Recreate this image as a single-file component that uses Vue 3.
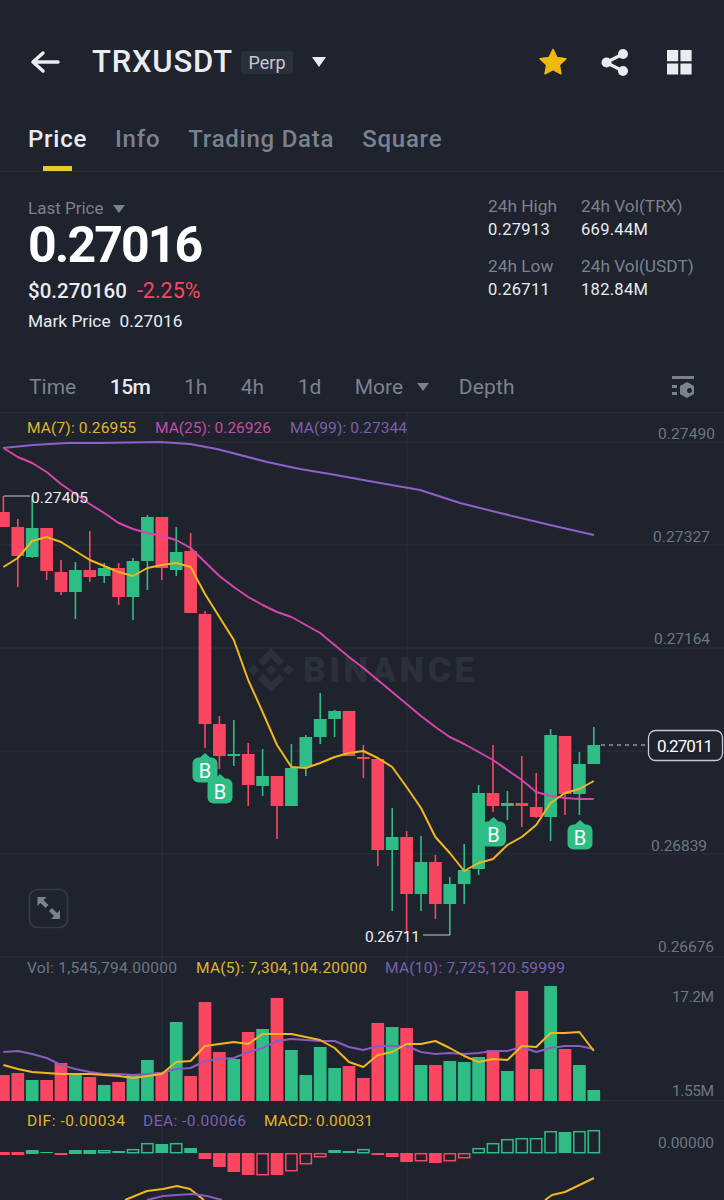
<script setup>
const xAt = (i) => 3.4 + 14.4 * i
const G = '#2ebd85'
const R = '#fb4661'

// [colour, bodyTop, bodyBottom, wickTop, wickBottom]
const raw = [
  ['r',512,527,496,527],['r',527,556,519,587],['g',528,557,496,558],['r',528,571,528,580],
  ['r',572,592,560,595],['g',570,592,562,619],['r',570,577,531,582],['g',568,576,563,583],
  ['r',568,597,563,605],['g',561,597,558,620],['g',517,561,515,590],['r',517,568,517,580],
  ['g',552,570,527,576],['r',551,613,533,613],['r',614,724,611,748],['r',724,756,716,769],
  ['g',754,756,720,766],['r',754,785,743,806],['g',776,786,749,796],['r',776,806,776,839],
  ['g',768,806,744,806],['g',737,767,735,776],['g',719,737,693,744],['g',711,719,710,737],
  ['r',711,756,711,756],['r',757,759,745,778],['r',759,850,759,866],['g',837,850,808,911],
  ['r',837,894,831,933],['g',862,894,836,911],['r',862,904,855,919],['g',884,904,877,935],
  ['g',870,884,844,904],['g',793,869,785,875],['r',793,806,745,812],['g',803,806,791,820],
  ['r',803,806,756,827],['r',807,817,773,818],['g',735,817,729,841],['r',736,794,736,815],
  ['g',764,794,752,815],['g',745,764,727,764]
]
const candles = raw.map((c, i) => ({
  x: xAt(i), fill: c[0] === 'g' ? G : R, top: c[1], h: c[2] - c[1], wt: c[3], wb: c[4]
}))

const volTop = [
  1075,1073,1080,1080,1063,1074,1077,1085,1082,1074,1060,1072,1022,1076,1002,1052,1059,1032,1029,998,1050,
  1075,1047,1068,1066,1078,1023,1027,1028,1065,1065,1061,1062,1057,1050,1071,991,1069,986,1049,1065,1090
]
const volGreen = new Set([2,5,7,9,10,12,16,18,20,21,22,23,27,29,31,32,33,35,38,40,41])
const vols = volTop.map((t, i) => ({ x: xAt(i), top: t, fill: volGreen.has(i) ? G : R }))

const ma7 = [567,558,541,537,542,551,560,566,572,576,568,565,563,567,594,617,640,680,712,745,767,768,763,757,753,751,758,767,787,808,837,853,871,863,859,845,837,825,803,793,789,781]
const ma25 = [448,457,463,472,484,494,504,513,523,529,533,536,540,548,562,576,587,597,605,612,617,625,633,645,657,668,680,692,704,716,727,737,744,752,760,770,780,792,796,798,799,799]
const ma99 = [[3,448],[33,445],[67,443],[100,443],[160,442],[190,444],[217,449],[267,462],[300,469],[330,474],[380,483],[420,490],[460,503],[500,513],[550,525],[594,535]]
const line = (arr) => arr.map((y, i) => `${xAt(i).toFixed(1)},${y}`).join(' ')
const ma7Pts = line(ma7)
const ma25Pts = line(ma25)
const ma99Pts = ma99.map((p) => p.join(',')).join(' ')

const vma5 = [1065,1069,1072,1073,1074,1074,1074,1075,1076,1078,1076,1074,1062,1061,1046,1044,1042,1044,1034,1034,1034,1037,1040,1048,1062,1067,1055,1052,1044,1044,1041,1048,1056,1062,1059,1060,1046,1047,1033,1033,1032,1051]
const vma10 = [1052,1051,1054,1058,1065,1069,1072,1074,1074,1075,1074,1073,1069,1068,1061,1059,1058,1052,1048,1041,1039,1040,1041,1041,1047,1050,1046,1046,1046,1052,1054,1053,1054,1053,1051,1051,1047,1052,1048,1046,1046,1049]
const vma5Pts = line(vma5)
const vma10Pts = line(vma10)

// [green?, hollow?, top, bottom] in px
const macdRaw = [
  [0,0,1152,1155],[0,0,1152,1155],[1,0,1150,1154],[1,0,1152,1153],[0,0,1153,1155],[1,0,1150,1154],[1,0,1150,1154],
  [1,1,1150,1153],[1,0,1151,1153],[1,1,1149,1153],[1,1,1143,1153],[1,0,1144,1153],[1,1,1143,1153],[1,0,1148,1153],
  [0,0,1153,1159],[0,0,1153,1167],[0,0,1153,1172],[0,0,1153,1175],[0,1,1153,1175],[0,0,1153,1175],[0,1,1153,1171],
  [0,1,1153,1164],[0,1,1153,1157],[1,0,1150,1153],[1,0,1151,1153],[1,1,1149,1153],[0,0,1153,1155],[0,0,1153,1157],
  [0,0,1153,1162],[0,1,1153,1161],[0,0,1153,1163],[0,1,1153,1161],[0,1,1153,1158],[1,1,1148,1153],[1,1,1143,1153],
  [1,1,1139,1153],[1,1,1138,1153],[1,1,1138,1153],[1,1,1131,1153],[1,0,1132,1153],[1,1,1131,1153],[1,1,1130,1153]
]
const macd = macdRaw.map((m, i) => ({
  x: xAt(i), color: m[0] ? G : R, hollow: !!m[1], top: m[2], h: m[3] - m[2]
}))

const marker = (cx, y) =>
  `M${cx} ${y} l5 4.500 h1.500 a6 6 0 0 1 6 6 v13 a6 6 0 0 1 -6 6 h-13 a6 6 0 0 1 -6 -6 v-13 a6 6 0 0 1 6 -6 h1.500 z`
const markers = [
  { cx: 205, y: 753 }, { cx: 220, y: 774 }, { cx: 493.5, y: 817 }, { cx: 580, y: 820 }
].map((m) => ({ ...m, d: marker(m.cx, m.y), ty: m.y + 24.5 }))

const hLines = [442, 545, 648, 751, 854, 957, 1100.5]

const labels = [
  { t: 'MA(7): 0.26955', x: 27, y: 433, w: 109, c: 'yl' },
  { t: 'MA(25): 0.26926', x: 155, y: 433, w: 116, c: 'pk' },
  { t: 'MA(99): 0.27344', x: 290, y: 433, w: 117, c: 'pu' },
  { t: '0.27490', x: 658, y: 439, w: 57, c: 'ax' },
  { t: '0.27327', x: 653, y: 542, w: 57, c: 'ax' },
  { t: '0.27164', x: 654, y: 644, w: 56, c: 'ax' },
  { t: '0.26839', x: 651, y: 851, w: 56, c: 'ax' },
  { t: '0.26676', x: 658, y: 952, w: 56, c: 'ax' },
  { t: '0.27405', x: 31, y: 503, w: 57, c: 'wh' },
  { t: '0.26711', x: 365, y: 942, w: 55, c: 'wh' },
  { t: 'Vol: 1,545,794.00000', x: 27, y: 973, w: 150, c: 'ax' },
  { t: 'MA(5): 7,304,104.20000', x: 196, y: 973, w: 171, c: 'yl' },
  { t: 'MA(10): 7,725,120.59999', x: 385, y: 973, w: 180, c: 'pu' },
  { t: '17.2M', x: 672, y: 1002, w: 42, c: 'ax' },
  { t: '1.55M', x: 672, y: 1096, w: 42, c: 'ax' },
  { t: 'DIF: -0.00034', x: 27, y: 1126, w: 98, c: 'yl' },
  { t: 'DEA: -0.00066', x: 143, y: 1126, w: 103, c: 'pu' },
  { t: 'MACD: 0.00031', x: 264, y: 1126, w: 109, c: 'yl' },
  { t: '0.00000', x: 658, y: 1148, w: 56, c: 'ax' }
]
</script>

<template>
  <div class="page">
    <header class="topbar">
      <svg class="back" width="30" height="24" viewBox="0 0 30 24">
        <path d="M28 12H3M13 3 3 12l10 9" fill="none" stroke="#eaecef" stroke-width="3.500" stroke-linecap="round" stroke-linejoin="round" />
      </svg>
      <h1 class="symbol">TRXUSDT</h1>
      <span class="perp">Perp</span>
      <span class="tri tri-title"></span>
      <div class="actions">
        <svg width="30" height="28" viewBox="0 0 30 28">
          <path d="M15 1.500l3.900 8.100 8.900 1.200-6.500 6.200 1.600 8.800L15 21.600l-7.900 4.200 1.600-8.800-6.500-6.200 8.900-1.200z" fill="#f0b90b" stroke="#f0b90b" stroke-width="1.600" stroke-linejoin="round" />
        </svg>
        <svg class="share" width="28" height="28" viewBox="0 0 28 28">
          <path d="M22 6 5 14.500 22 23" fill="none" stroke="#eaecef" stroke-width="3.200" />
          <circle cx="22" cy="6" r="5" fill="#eaecef" />
          <circle cx="5.500" cy="14.500" r="5" fill="#eaecef" />
          <circle cx="22" cy="23" r="5" fill="#eaecef" />
        </svg>
        <svg width="25" height="25" viewBox="0 0 25 25">
          <path d="M0 0h11.200v11.200H0zM13.400 0h11.200v11.200H13.400zM0 13.400h11.200v11.200H0zM13.400 13.400h11.200v11.200H13.400z" fill="#eaecef" />
        </svg>
      </div>
    </header>

    <nav class="tabs">
      <a class="tab on">Price</a>
      <a class="tab">Info</a>
      <a class="tab">Trading Data</a>
      <a class="tab">Square</a>
    </nav>

    <section class="stats">
      <div class="main">
        <div class="last">Last Price <span class="tri tri-sm"></span></div>
        <div class="big">0.27016</div>
        <div class="sub"><span>$0.270160</span><span class="neg">-2.25%</span></div>
        <div class="mark"><span>Mark Price</span><span>0.27016</span></div>
      </div>
      <div class="side">
        <div class="lab">24h High</div><div class="lab">24h Vol(TRX)</div>
        <div class="val">0.27913</div><div class="val">669.44M</div>
        <div class="lab lab2">24h Low</div><div class="lab lab2">24h Vol(USDT)</div>
        <div class="val">0.26711</div><div class="val">182.84M</div>
      </div>
    </section>

    <nav class="periods">
      <span>Time</span>
      <span class="cur">15m</span>
      <span>1h</span>
      <span>4h</span>
      <span>1d</span>
      <span class="more">More <span class="tri tri-sm"></span></span>
      <span class="depth">Depth</span>
      <svg class="kicon" width="24" height="22" viewBox="0 0 24 22">
        <path d="M1 0h22v3H1zM1 9h5v3H1zM1 16h5v3H1z" fill="#7b828e" />
        <path fill-rule="evenodd" d="M16 6l7 4v8l-7 4-7-4v-8zm0 8.500a2.500 2.500 0 1 0 0-.01z" fill="#7b828e" />
      </svg>
    </nav>

    <div class="chart">
      <svg class="plot" width="724" height="787" viewBox="0 413 724 787">
        <line v-for="y in hLines" :key="y" x1="0" x2="724" :y1="y" :y2="y" class="grid" />
        <line x1="162" x2="162" y1="413" y2="1200" class="grid" />
        <line x1="407" x2="407" y1="413" y2="1200" class="grid" />

        <path class="mark-logo" d="M271 648l13 13-5 5-8-8-8 8-5-5zM271 692l13-13-5-5-8 8-8-8-5 5zM248 670l5.500-5.500 5.500 5.500-5.500 5.500zM283 670l5.500-5.500 5.500 5.500-5.500 5.500zM271 664.500l5.500 5.500-5.500 5.500-5.500-5.500z" />
        <text x="303" y="682" class="wm" textLength="171">BINANCE</text>

        <rect v-for="(v, i) in vols" :key="'v' + i" :x="v.x - 6.350" :y="v.top" width="12.700" :height="1101 - v.top" :fill="v.fill" />
        <polyline :points="vma10Pts" class="ln" stroke="#8a5cc0" />
        <polyline :points="vma5Pts" class="ln" stroke="#f3b61f" />

        <g v-for="m in markers" :key="'m' + m.cx">
          <path :d="m.d" :fill="G" />
          <text :x="m.cx" :y="m.ty" text-anchor="middle" class="btxt">B</text>
        </g>

        <g v-for="(c, i) in candles" :key="'c' + i">
          <line :x1="c.x" :x2="c.x" :y1="c.wt" :y2="c.wb" :stroke="c.fill" stroke-width="1.600" />
          <rect :x="c.x - 6.350" :y="c.top" width="12.700" :height="c.h" :fill="c.fill" />
        </g>

        <polyline :points="ma99Pts" class="ln" stroke="#9060c8" />
        <polyline :points="ma25Pts" class="ln" stroke="#d844ab" />
        <polyline :points="ma7Pts" class="ln" stroke="#f3b61f" />

        <path d="M4 496H30M423 935H450" fill="none" stroke="#c7cad0" stroke-width="1" />
        <line x1="601" x2="648" y1="745" y2="745" stroke="#c7cad0" stroke-dasharray="4 4" />
        <rect x="648.500" y="730.500" width="74" height="30" rx="7" fill="#1e232e" stroke="#c7cad0" stroke-width="1.300" />
        <text x="657" y="752" textLength="56" class="now">0.27011</text>

        <rect x="29.500" y="889.500" width="38" height="38" rx="8" fill="none" stroke="#343a46" stroke-width="1.600" />
        <path d="M37.500 897h9l-3 3 5 5-3 3-5-5-3 3zM60 919h-9l3-3-5-5 3-3 5 5 3-3z" fill="#7b828e" />

        <g v-for="(m, i) in macd" :key="'d' + i">
          <rect v-if="m.hollow" :x="m.x - 5.600" :y="m.top + 0.700" width="11.200" :height="m.h - 1" fill="none" :stroke="m.color" stroke-width="1.500" />
          <rect v-else :x="m.x - 6.350" :y="m.top" width="12.700" :height="m.h" :fill="m.color" />
        </g>

        <polyline points="125,1200 147,1191 163,1189 177,1186 190,1189 204,1200" class="ln" stroke="#f3b61f" />
        <polyline points="147,1200 163,1196 177,1195 192,1194 207,1196 222,1200" class="ln" stroke="#8a5cc0" />
        <polyline points="545,1200 552,1195 565,1192 594,1178" class="ln" stroke="#f3b61f" />

        <text v-for="l in labels" :key="l.t" :x="l.x" :y="l.y" :textLength="l.w" class="lbl" :class="l.c">{{ l.t }}</text>
      </svg>
    </div>
  </div>
</template>

<style scoped>
.page {
  width: 724px;
  height: 1200px;
  overflow: hidden;
  background: #1e232e;
  color: #eaecef;
  font-family: Roboto, "Noto Sans", sans-serif;
}
.topbar {
  height: 44px;
  margin-top: 40px;
  padding: 0 32px 0 30px;
  display: flex;
  align-items: center;
}
.back { margin-right: 32px; }
.symbol {
  margin: 0;
  font-size: 31px;
  font-weight: 500;
  letter-spacing: 0.8px;
  line-height: 44px;
  color: #eaecef;
}
.perp {
  margin-left: 8px;
  width: 52px;
  height: 23px;
  line-height: 23px;
  text-align: center;
  font-size: 18px;
  color: #c5c9d0;
  background: #2a303b;
  border-radius: 3px;
}
.tri {
  display: inline-block;
  width: 0;
  height: 0;
  border-left: 6px solid transparent;
  border-right: 6px solid transparent;
  border-top: 8px solid #7b828e;
}
.tri-title {
  margin-left: 19px;
  border-left-width: 7.500px;
  border-right-width: 7.500px;
  border-top: 10px solid #eaecef;
}
.actions {
  margin-left: auto;
  display: flex;
  align-items: center;
  gap: 33px;
}
.share { margin-right: 5px; }
.tabs {
  height: 47px;
  margin-top: 40px;
  padding-left: 28px;
  display: flex;
  gap: 28px;
  border-bottom: 1px solid #2c313c;
}
.tab {
  position: relative;
  font-size: 24px;
  font-weight: 500;
  letter-spacing: 0.75px;
  line-height: 30px;
  color: #7b828e;
}
.tab.on { color: #eaecef; }
.tab.on::after {
  content: "";
  position: absolute;
  left: 15px;
  right: 15px;
  bottom: 0;
  height: 5px;
  background: #f0c62d;
}
.stats {
  height: 172px;
  padding: 26px 0 0 28px;
  display: flex;
  justify-content: space-between;
  box-sizing: border-box;
}
.last {
  font-size: 17px;
  line-height: 21px;
  color: #7b828e;
  display: flex;
  align-items: center;
  gap: 9px;
}
.big {
  margin-top: 1px;
  font-size: 50px;
  font-weight: 700;
  letter-spacing: -1.900px;
  line-height: 50px;
  color: #fff;
}
.sub {
  margin-top: 8px;
  display: flex;
  gap: 10px;
  font-size: 20.500px;
  font-weight: 500;
  line-height: 26px;
}
.neg { color: #fb4661; font-weight: 400; font-size: 21.500px; }
.mark {
  margin-top: 6px;
  display: flex;
  gap: 9px;
  font-size: 17.300px;
  line-height: 22px;
}
.side {
  display: grid;
  grid-template-columns: 93px 143px;
  align-content: start;
  margin-top: -4px;
  font-size: 17.300px;
}
.side > div { line-height: 24px; }
.lab { color: #7b828e; }
.val { color: #eaecef; font-size: 16.500px; letter-spacing: 0.300px; }
.lab2 { margin-top: 12px; }
.periods {
  height: 69px;
  padding: 18px 29px 0 29px;
  display: flex;
  align-items: center;
  gap: 33.500px;
  font-size: 21px;
  color: #7b828e;
  box-sizing: border-box;
  border-bottom: 1px solid #2c313c;
}
.periods .cur { color: #eaecef; font-weight: 500; letter-spacing: -0.500px; }
.more {
  display: flex;
  align-items: center;
  gap: 14px;
}
.depth { margin-left: -4px; letter-spacing: 0.200px; }
.kicon { margin-left: auto; }
.chart { height: 787px; }
.plot { display: block; }
.grid { stroke: #2c313c; stroke-width: 1; }
.ln { fill: none; stroke-width: 2; stroke-linejoin: round; }
.mark-logo { fill: #2b303b; }
.wm {
  font-family: Roboto, sans-serif;
  font-size: 35px;
  font-weight: 900;
  fill: #2b303b;
}
.btxt {
  font-family: Roboto, sans-serif;
  font-size: 20px;
  fill: #fff;
}
.now {
  font-family: Roboto, sans-serif;
  font-size: 17px;
  fill: #fff;
}
.lbl {
  font-family: Roboto, sans-serif;
  font-size: 15.500px;
}
.yl { fill: #e2b52c; }
.pk { fill: #c94aa5; }
.pu { fill: #7c60ad; }
.ax { fill: #6f7682; }
.wh { fill: #eef0f2; }
</style>

<style>
html, body { background: #1e232e; }
</style>
